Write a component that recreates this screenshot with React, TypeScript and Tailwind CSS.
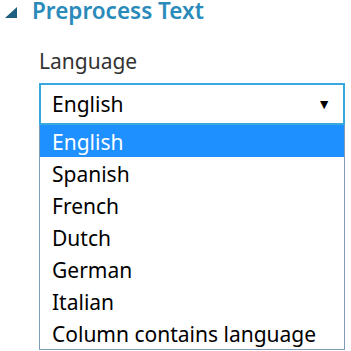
import React from 'react';

const options = ['English', 'Spanish', 'French', 'Dutch', 'German', 'Italian', 'Column contains language'];

export default function App() {
  const selected = 'English';
  return (
    <div className="w-[351px] h-[351px] bg-white overflow-hidden" style={{ fontFamily: '"Noto Sans", "Open Sans", sans-serif' }}>
      {/* Section header */}
      <div className="flex items-start h-[27px] pl-[5px]">
        <svg width="12" height="11" viewBox="0 0 12 11" className="mt-[7px] mr-[15px] shrink-0">
          <polygon points="12,0 12,11 0,11" fill="#1d5f80" />
        </svg>
        <span className="block text-[22.5px] font-semibold text-[#2a8bbb] leading-[20px] pt-[1px]">Preprocess Text</span>
      </div>

      <div className="pl-[39px] pr-[6px]">
        <div className="mt-[24px] text-[21px] text-[#333] leading-none">Language</div>

        {/* Select */}
        <div className="mt-[11px] h-[42px] border-2 border-[#37a9de] flex items-center justify-between pl-[11px] pr-[12px]">
          <span className="text-[21px] text-black leading-none">{selected}</span>
          <span className="text-[14px] text-black leading-none">▼</span>
        </div>

        {/* Options list */}
        <ul className="border border-t-0 border-[#7f9db9] h-[225px]">
          {options.map((o) => (
            <li
              key={o}
              className={
                o === selected
                  ? 'h-[32px] flex items-center pl-[12px] pt-[3px] text-[21px] leading-none bg-[#1e90ff] text-white'
                  : 'h-[32px] flex items-center pl-[12px] pt-[3px] text-[21px] leading-none text-black'
              }
            >
              {o}
            </li>
          ))}
        </ul>
      </div>
    </div>
  );
}
